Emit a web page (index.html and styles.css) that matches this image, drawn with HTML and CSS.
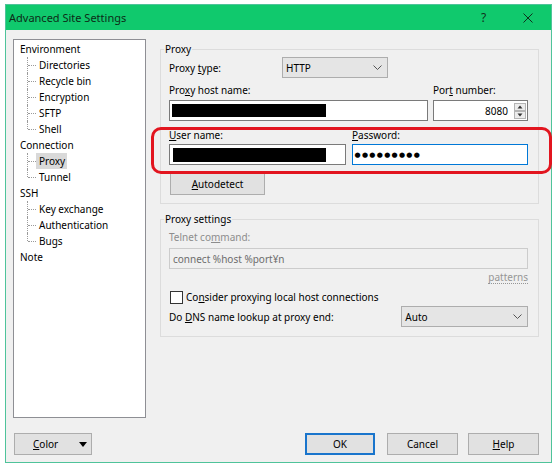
FILE: index.html
```html
<!DOCTYPE html>
<html>
<head>
<meta charset="utf-8">
<title>Advanced Site Settings</title>
<link rel="stylesheet" href="styles.css">
</head>
<body>
<div class="window">
  <div class="titlebar">
    <span class="title">Advanced Site Settings</span>
    <span class="tb-btn tb-help">?</span>
    <span class="tb-btn tb-close">
      <svg width="10" height="10" viewBox="0 0 10 10"><path d="M0.5 0.5L9.5 9.5M9.5 0.5L0.5 9.5" stroke="#10301c" stroke-width="1" fill="none"/></svg>
    </span>
  </div>
  <div class="content">
    <div class="main">
      <ul class="tree">
        <li>Environment</li>
        <li class="child">Directories</li>
        <li class="child">Recycle bin</li>
        <li class="child">Encryption</li>
        <li class="child">SFTP</li>
        <li class="child last">Shell</li>
        <li>Connection</li>
        <li class="child"><span class="sel">Proxy</span></li>
        <li class="child last">Tunnel</li>
        <li>SSH</li>
        <li class="child">Key exchange</li>
        <li class="child">Authentication</li>
        <li class="child last">Bugs</li>
        <li>Note</li>
      </ul>
      <div class="pane">
        <div class="group g-proxy">
          <div class="legend">Proxy</div>
          <div class="row-type">
            <span class="type-label">Proxy <u>t</u>ype:</span>
            <div class="combo combo-type"><span>HTTP</span>
              <svg width="9" height="5" viewBox="0 0 9 5"><path d="M0.5 0.5L4.5 4.5L8.5 0.5" stroke="#555" fill="none"/></svg>
            </div>
          </div>
          <div class="labels labels-host">
            <span class="lab-host">Pro<u>x</u>y host name:</span>
            <span class="lab-port">Por<u>t</u> number:</span>
          </div>
          <div class="inputs inputs-host">
            <div class="edit edit-host"><span class="redact redact-host"></span></div>
            <div class="edit edit-port"><span>8080</span>
              <svg class="spin" width="12" height="16" viewBox="0 0 12 16">
                <rect x="0.5" y="0.5" width="11" height="7" fill="#ececec" stroke="#b4b4b4"/>
                <rect x="0.5" y="8.5" width="11" height="7" fill="#ececec" stroke="#b4b4b4"/>
                <path d="M3.5 5.5L6 2.5L8.5 5.5Z" fill="#333"/>
                <path d="M3.5 10.5L6 13.5L8.5 10.5Z" fill="#333"/>
              </svg>
            </div>
          </div>
          <div class="labels labels-user">
            <span class="lab-user"><u>U</u>ser name:</span>
            <span class="lab-pass"><u>P</u>assword:</span>
          </div>
          <div class="inputs inputs-user">
            <div class="edit edit-user"><span class="redact redact-user"></span></div>
            <div class="edit edit-pass focused"><span class="dots">●●●●●●●●●</span></div>
          </div>
          <div class="btn btn-auto"><span><u>A</u>utodetect</span></div>
        </div>
        <div class="group g-settings">
          <div class="legend">Proxy settings</div>
          <div class="telnet-label disabled">Telnet co<u>m</u>mand:</div>
          <div class="edit edit-telnet">connect %host %port¥n</div>
          <div class="patterns-row"><span class="patterns">patterns</span></div>
          <div class="check-row">
            <span class="checkbox"></span>
            <span>Co<u>n</u>sider proxying local host connections</span>
          </div>
          <div class="dns-row">
            <span class="dns-label">Do <u>D</u>NS name lookup at proxy end:</span>
            <div class="combo combo-dns"><span>Auto</span>
              <svg width="9" height="5" viewBox="0 0 9 5"><path d="M0.5 0.5L4.5 4.5L8.5 0.5" stroke="#555" fill="none"/></svg>
            </div>
          </div>
        </div>
      </div>
    </div>
    <div class="footer">
      <div class="btn btn-color"><span><u>C</u>olor</span><span class="arrow"></span></div>
      <div class="spacer"></div>
      <div class="btn btn-ok">OK</div>
      <div class="btn btn-cancel">Cancel</div>
      <div class="btn btn-help"><u>H</u>elp</div>
    </div>
  </div>
  <div class="annot"></div>
</div>
</body>
</html>
```
FILE: styles.css
```css
* { box-sizing: border-box; }

body {
  margin: 0;
  padding: 4px 0 0 5px;
  background: #ffffff;
  font-family: "Noto Sans", "Segoe UI", sans-serif;
  font-size: 10px;
  color: #000;
}

u { text-decoration: underline; text-underline-offset: 1px; }

.window {
  position: relative;
  width: 547px;
  height: 459px;
  border: 1px solid #4fc39a;
  background: #f0f0f0;
  display: flex;
  flex-direction: column;
}

.titlebar {
  height: 25px;
  background: #10c96d;
  display: flex;
  align-items: center;
}

.title {
  flex: 1;
  padding-left: 3px;
  font-size: 11px;
  color: #0d2b17;
}

.tb-btn {
  width: 46px;
  height: 25px;
  display: flex;
  align-items: center;
  justify-content: center;
  color: #10301c;
  font-size: 12px;
}

.tb-help { padding-left: 3px; }

.content {
  flex: 1;
  padding: 9px 12px 0 7px;
  display: flex;
  flex-direction: column;
}

.main {
  display: flex;
  gap: 14px;
  height: 379px;
}

.tree {
  width: 133px;
  height: 379px;
  margin: 0;
  padding: 1px 0 0 6px;
  list-style: none;
  background: #fff;
  border: 1px solid #8e8f94;
}

.tree li {
  height: 16px;
  line-height: 16px;
  white-space: nowrap;
}

.tree li.child {
  position: relative;
  padding-left: 19px;
}

.tree li.child::before {
  content: "";
  position: absolute;
  left: 7px;
  top: 0;
  height: 16px;
  border-left: 1px dotted #9a9a9a;
}

.tree li.child.last::before { height: 8px; }

.tree li.child::after {
  content: "";
  position: absolute;
  left: 8px;
  top: 8px;
  width: 8px;
  border-top: 1px dotted #9a9a9a;
}

.tree .sel {
  background: #d9d9d9;
  margin-left: -3px;
  padding: 1px 2px 1px 3px;
}

.pane {
  width: 379px;
  display: flex;
  flex-direction: column;
}

.group {
  border: 1px solid #dcdcdc;
  padding: 0 10px 8px 8px;
}

.legend {
  margin: -8px 0 0 -5px;
  padding: 0 1px;
  width: fit-content;
  line-height: 14px;
  background: #f0f0f0;
}

.g-proxy { margin-top: 10px; }

.row-type {
  display: flex;
  align-items: center;
  height: 21px;
  margin-top: 1px;
}

.type-label { width: 113px; }

.combo {
  height: 21px;
  border: 1px solid #adadad;
  background: #e5e5e5;
  display: flex;
  align-items: center;
  justify-content: space-between;
  padding: 0 5px 0 3px;
}

.combo-type { width: 106px; }

.labels {
  display: flex;
  line-height: 14px;
}

.labels-host { margin-top: 5px; }
.labels-user { margin-top: 7px; }

.lab-host { width: 264px; }
.lab-user { width: 183px; }

.inputs {
  display: flex;
}

.inputs-host { margin-top: 3px; gap: 5px; }
.inputs-user { margin-top: 2px; gap: 6px; }

.edit {
  height: 21px;
  border: 1px solid #7a7a7a;
  background: #fff;
  display: flex;
  align-items: center;
}

.edit-host { width: 259px; padding-left: 2px; }
.edit-port {
  width: 95px;
  justify-content: flex-end;
  padding-right: 1px;
}
.edit-port .spin { margin-left: 6px; }

.edit-user { width: 177px; padding-left: 3px; }
.edit-pass { width: 177px; padding-left: 2px; }

.focused { border-color: #0078d7; }

.redact {
  display: block;
  background: #000;
}

.redact-host { width: 154px; height: 13px; }
.redact-user { width: 153px; height: 14px; }

.dots {
  font-family: "DejaVu Sans", sans-serif;
  font-size: 7px;
  letter-spacing: 1.3px;
}

.btn {
  height: 22px;
  border: 1px solid #adadad;
  background: #e1e1e1;
  display: flex;
  align-items: center;
  justify-content: center;
}

.btn-auto {
  width: 95px;
  margin-top: 8px;
  margin-left: 1px;
}

.g-settings {
  margin-top: 15px;
  padding-bottom: 9px;
}

.disabled { color: #8d8d8d; }

.telnet-label {
  margin-top: 4px;
  line-height: 14px;
}

.edit-telnet {
  margin-top: 4px;
  border-color: #cccccc;
  background: #f0f0f0;
  color: #6d6d6d;
  padding-left: 3px;
}

.patterns-row {
  margin-top: 2px;
  line-height: 14px;
  display: flex;
  justify-content: flex-end;
}

.patterns {
  color: #969696;
  border-bottom: 1px dotted #969696;
  line-height: 12px;
}

.check-row {
  margin-top: 5px;
  height: 16px;
  display: flex;
  align-items: center;
  gap: 3px;
}

.checkbox {
  width: 13px;
  height: 13px;
  border: 1px solid #333;
  background: #fff;
  margin-left: 1px;
}

.dns-row {
  margin-top: 1px;
  display: flex;
  align-items: center;
}

.dns-label { width: 233px; }
.combo-dns { width: 127px; }

.footer {
  margin-top: 15px;
  display: flex;
}

.btn-color {
  width: 78px;
  margin-left: 1px;
  justify-content: space-between;
  padding: 0 4px 0 18px;
}

.arrow {
  width: 0;
  height: 0;
  border-left: 4.5px solid transparent;
  border-right: 4.5px solid transparent;
  border-top: 5px solid #000;
}

.spacer { flex: 1; }

.btn-ok {
  width: 70px;
  margin-right: 12px;
  border: 2px solid #1a75cc;
}

.btn-cancel {
  width: 71px;
  margin-right: 10px;
}

.btn-help { width: 71px; }

.annot {
  position: absolute;
  left: 145px;
  top: 122px;
  width: 401px;
  height: 47px;
  border: 3px solid #e2151f;
  border-radius: 10px;
  pointer-events: none;
}
```
